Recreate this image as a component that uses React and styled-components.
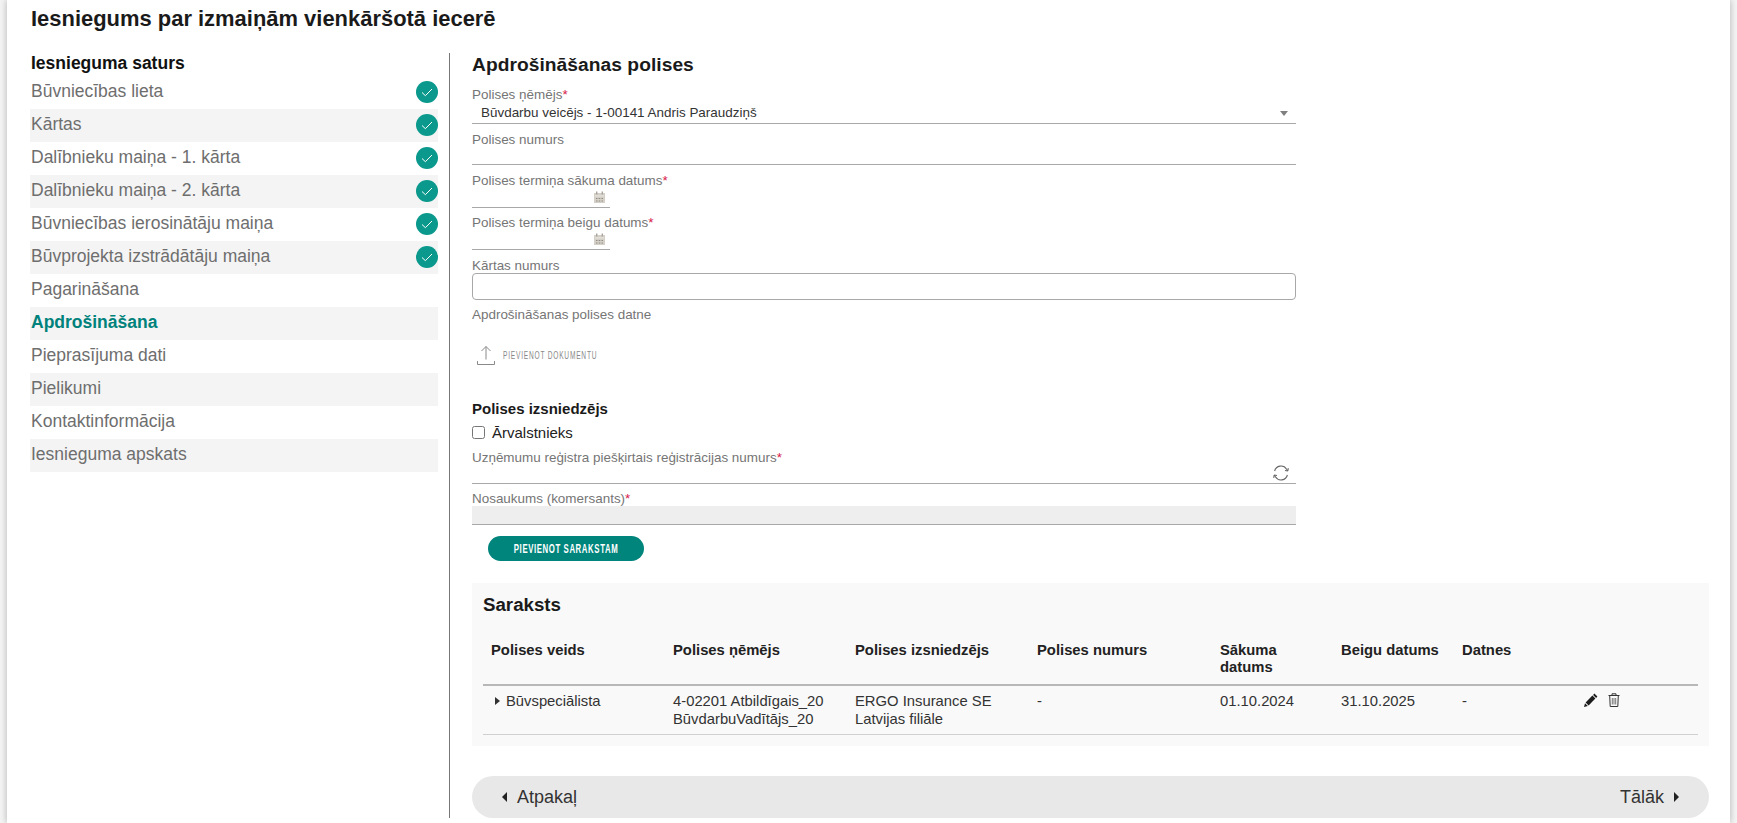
import React from 'react'
import styled, { createGlobalStyle } from 'styled-components'

const GlobalStyle = createGlobalStyle`
  html, body {
    margin: 0;
    height: 100%;
    overflow: hidden;
    background: #f4f4f4;
    font-family: "Liberation Sans", Arial, sans-serif;
  }
`

const steps = [
  { name: 'Būvniecības lieta', done: true },
  { name: 'Kārtas', done: true },
  { name: 'Dalībnieku maiņa - 1. kārta', done: true },
  { name: 'Dalībnieku maiņa - 2. kārta', done: true },
  { name: 'Būvniecības ierosinātāju maiņa', done: true },
  { name: 'Būvprojekta izstrādātāju maiņa', done: true },
  { name: 'Pagarināšana' },
  { name: 'Apdrošināšana', active: true },
  { name: 'Pieprasījuma dati' },
  { name: 'Pielikumi' },
  { name: 'Kontaktinformācija' },
  { name: 'Iesnieguma apskats' },
]

const columns = [
  { title: 'Polises veids', width: 182 },
  { title: 'Polises ņēmējs', width: 182 },
  { title: 'Polises izsniedzējs', width: 182 },
  { title: 'Polises numurs', width: 183 },
  { title: 'Sākuma datums', width: 121 },
  { title: 'Beigu datums', width: 121 },
  { title: 'Datnes', width: 122 },
  { title: '', width: 122 },
]

const CheckBadge = () => (
  <BadgeSvg width="22" height="22" viewBox="0 0 22 22">
    <circle cx="11" cy="11" r="11" fill="#0a998c" />
    <path d="M6 11.5l3.4 3.2L16 8" fill="none" stroke="#fff" strokeWidth="1" />
  </BadgeSvg>
)

const CalendarIcon = () => (
  <svg width="11" height="12" viewBox="0 0 11 12">
    <path d="M0 2h11v10H0z" fill="#d4d0c8" />
    <path d="M2 0.5h1.4v3H2zM7.6 0.5H9v3H7.6z" fill="#a8a49c" />
    <path d="M1 4.5h9v.8H1z" fill="#efedea" />
    <path d="M2 7h1.5v1H2zM4.7 7h1.6v1H4.7zM7.5 7H9v1H7.5zM2 9.4h1.5v1H2zM4.7 9.4h1.6v1H4.7zM7.5 9.4H9v1H7.5z" fill="#8f8b84" />
  </svg>
)

const UploadIcon = () => (
  <svg width="20" height="20" viewBox="0 0 20 20" fill="none" stroke="#8a8a8a" strokeWidth="1">
    <path d="M10 14.5V1.5M5.5 6L10 1.5 14.5 6" />
    <path d="M1.5 16v3.5h17V16" />
  </svg>
)

const RefreshIcon = () => (
  <svg width="18" height="18" viewBox="0 0 18 18" fill="none" stroke="#666" strokeWidth="1.1">
    <path d="M2.6 7A6.6 6.6 0 0 1 14.6 5.2L15.8 7" />
    <path d="M15.4 11A6.6 6.6 0 0 1 3.4 12.8L2.2 11" />
    <path d="M15.8 7l-2.8-.5M15.8 7l.5-2.8M2.2 11l2.8.5M2.2 11l-.5 2.8" />
  </svg>
)

const PencilIcon = () => (
  <svg width="14" height="14" viewBox="0 0 14 14">
    <path d="M10.4 0.6l3 3-1.3 1.3-3-3zM8.4 2.6l3 3-6.8 6.8-3-3z" fill="#1c1c1c" />
    <path d="M1 10.2l2.8 2.8L0 14z" fill="#1c1c1c" />
  </svg>
)

const TrashIcon = () => (
  <svg width="12" height="14" viewBox="0 0 12 14" fill="none" stroke="#333" strokeWidth="1">
    <path d="M0.5 2.5h11M4 2.5V.8h4v1.7M1.7 2.5l.5 11h7.6l.5-11" />
    <path d="M4.3 5v6.5M6 5v6.5M7.7 5v6.5" stroke="#777" />
  </svg>
)

const App = () => {
  return (
    <>
      <GlobalStyle />
      <Page>
        <Title>Iesniegums par izmaiņām vienkāršotā iecerē</Title>
        <Columns>
          <Sidebar>
            <SidebarTitle>Iesnieguma saturs</SidebarTitle>
            {steps.map((step, i) => (
              <StepRow key={step.name} $striped={i % 2 === 1}>
                <StepName $active={step.active}>{step.name}</StepName>
                {step.done && <CheckBadge />}
              </StepRow>
            ))}
          </Sidebar>
          <Content>
            <Heading>Apdrošināšanas polises</Heading>
            <FormBlock>
              <Field $gap={9}>
                <Label>Polises ņēmējs<Star>*</Star></Label>
                <SelectBox>
                  Būvdarbu veicējs - 1-00141 Andris Paraudziņš
                  <SelectArrow />
                </SelectBox>
              </Field>
              <Field>
                <Label>Polises numurs</Label>
                <LineInput $h={18} />
              </Field>
              <Field>
                <Label>Polises termiņa sākuma datums<Star>*</Star></Label>
                <DateInput><CalendarIcon /></DateInput>
              </Field>
              <Field $gap={6}>
                <Label>Polises termiņa beigu datums<Star>*</Star></Label>
                <DateInput><CalendarIcon /></DateInput>
              </Field>
              <Field>
                <Label>Kārtas numurs</Label>
                <BoxInput />
              </Field>
              <Field $gap={6}>
                <Label>Apdrošināšanas polises datne</Label>
                <UploadRow>
                  <UploadIcon />
                  <UploadText>Pievienot dokumentu</UploadText>
                </UploadRow>
              </Field>
              <SubHeading>Polises izsniedzējs</SubHeading>
              <CheckRow>
                <input type="checkbox" />
                Ārvalstnieks
              </CheckRow>
              <Field $gap={7}>
                <Label>Uzņēmumu reģistra piešķirtais reģistrācijas numurs<Star>*</Star></Label>
                <LineInput $h={19}>
                  <RefreshSlot><RefreshIcon /></RefreshSlot>
                </LineInput>
              </Field>
              <Field $gap={6}>
                <Label>Nosaukums (komersants)<Star>*</Star></Label>
                <LineInput $h={19} $disabled />
              </Field>
              <AddButton><AddButtonText>Pievienot sarakstam</AddButtonText></AddButton>
            </FormBlock>
            <ListPanel>
              <ListTitle>Saraksts</ListTitle>
              <Table>
                <thead>
                  <tr>
                    {columns.map((col) => (
                      <HeadCell key={col.title} $w={col.width}>{col.title}</HeadCell>
                    ))}
                  </tr>
                </thead>
                <tbody>
                  <tr>
                    <BodyCell><RowCaret />Būvspeciālista</BodyCell>
                    <BodyCell>4-02201 Atbildīgais_20<br />BūvdarbuVadītājs_20</BodyCell>
                    <BodyCell>ERGO Insurance SE<br />Latvijas filiāle</BodyCell>
                    <BodyCell>-</BodyCell>
                    <BodyCell>01.10.2024</BodyCell>
                    <BodyCell>31.10.2025</BodyCell>
                    <BodyCell>-</BodyCell>
                    <BodyCell>
                      <Actions><PencilIcon /><TrashIcon /></Actions>
                    </BodyCell>
                  </tr>
                </tbody>
              </Table>
            </ListPanel>
            <Footer>
              <NavLink><CaretLeft />Atpakaļ</NavLink>
              <NavLink>Tālāk<CaretRight /></NavLink>
            </Footer>
          </Content>
        </Columns>
      </Page>
    </>
  )
}

const Page = styled.div`
  box-sizing: border-box;
  width: 1723px;
  height: 823px;
  margin-left: 7px;
  padding: 6px 21px 0 23px;
  background: #fff;
  box-shadow: 0 0 7px rgba(0, 0, 0, 0.28);
  overflow: hidden;
`

const Title = styled.h1`
  margin: 0;
  padding-left: 1px;
  font-size: 21.95px;
  line-height: 26px;
  font-weight: 700;
  color: #1a1a1a;
`

const Columns = styled.div`
  display: flex;
  margin-top: 21px;
  height: 765px;
`

const Sidebar = styled.div`
  width: 408px;
  flex: none;
`

const SidebarTitle = styled.div`
  height: 23px;
  padding-left: 1px;
  line-height: 20px;
  font-size: 17.5px;
  font-weight: 700;
  color: #111;
`

const StepRow = styled.div`
  box-sizing: border-box;
  display: flex;
  align-items: center;
  justify-content: space-between;
  height: 33px;
  padding-left: 1px;
  background: ${(p) => (p.$striped ? '#f4f4f4' : 'transparent')};
`

const StepName = styled.span`
  margin-bottom: 2px;
  font-size: 17.5px;
  font-weight: ${(p) => (p.$active ? 700 : 400)};
  color: ${(p) => (p.$active ? '#00827c' : '#6e6e6e')};
`

const BadgeSvg = styled.svg`
  margin-bottom: 1px;
`

const Content = styled.div`
  box-sizing: border-box;
  flex: 1;
  margin-left: 11px;
  padding-left: 22px;
  border-left: 1px solid #777;
`

const Heading = styled.h2`
  margin: 0;
  font-size: 19.2px;
  line-height: 24px;
  font-weight: 700;
  letter-spacing: 0.05px;
  color: #1a1a1a;
`

const FormBlock = styled.div`
  width: 824px;
`

const Field = styled.div`
  margin-top: ${(p) => p.$gap ?? 7}px;
`

const Label = styled.div`
  height: 16px;
  line-height: 17px;
  font-size: 13.44px;
  color: #757575;
`

const Star = styled.span`
  color: #d81b4a;
`

const SelectBox = styled.div`
  box-sizing: border-box;
  position: relative;
  height: 22px;
  padding: 2px 0 0 9px;
  line-height: 17px;
  font-size: 13.44px;
  color: #333;
  border-bottom: 1px solid #a8a8a8;
`

const SelectArrow = styled.span`
  position: absolute;
  right: 8px;
  top: 9px;
  border-left: 4px solid transparent;
  border-right: 4px solid transparent;
  border-top: 5px solid #808080;
`

const LineInput = styled.div`
  box-sizing: border-box;
  position: relative;
  height: ${(p) => p.$h}px;
  border-bottom: 1px solid #a8a8a8;
  background: ${(p) => (p.$disabled ? '#eeeeee' : 'transparent')};
`

const RefreshSlot = styled.span`
  position: absolute;
  right: 6px;
  top: -1px;
`

const DateInput = styled.div`
  box-sizing: border-box;
  display: flex;
  justify-content: flex-end;
  align-items: flex-start;
  width: 138px;
  height: 20px;
  padding: 3px 5px 0 0;
  border-bottom: 1px solid #a8a8a8;
`

const BoxInput = styled.div`
  box-sizing: border-box;
  height: 27px;
  border: 1px solid #a8a8a8;
  border-radius: 4px;
`

const UploadRow = styled.div`
  display: flex;
  align-items: center;
  gap: 7px;
  height: 20px;
  margin-top: 23px;
  padding-left: 4px;
`

const UploadText = styled.span`
  display: inline-block;
  font-size: 11px;
  letter-spacing: 1.3px;
  text-transform: uppercase;
  white-space: nowrap;
  color: #888;
  transform: scaleX(0.6);
  transform-origin: left center;
`

const SubHeading = styled.div`
  margin-top: 35px;
  line-height: 18px;
  font-size: 15px;
  font-weight: 700;
  color: #1a1a1a;
`

const CheckRow = styled.label`
  display: flex;
  align-items: center;
  gap: 7px;
  height: 20px;
  margin-top: 4px;
  font-size: 15px;
  color: #222;

  input {
    width: 13px;
    height: 13px;
    margin: 0;
  }
`

const AddButton = styled.button`
  display: flex;
  align-items: center;
  justify-content: center;
  width: 156px;
  height: 25px;
  margin: 11px 0 0 16px;
  padding: 0;
  border: 0;
  border-radius: 13px;
  background: #00857d;
  overflow: hidden;
`

const AddButtonText = styled.span`
  flex: none;
  font-family: "Liberation Sans", Arial, sans-serif;
  font-size: 13px;
  font-weight: 700;
  letter-spacing: 1px;
  text-transform: uppercase;
  white-space: nowrap;
  color: #fff;
  transform: scaleX(0.6);
`

const ListPanel = styled.div`
  box-sizing: border-box;
  height: 163px;
  margin-top: 22px;
  padding: 10px 11px 0;
  background: #f9f9f9;
`

const ListTitle = styled.div`
  line-height: 24px;
  font-size: 18.7px;
  font-weight: 700;
  color: #1a1a1a;
`

const Table = styled.table`
  width: 1215px;
  margin-top: 16px;
  border-collapse: collapse;
  table-layout: fixed;
`

const HeadCell = styled.th`
  box-sizing: border-box;
  width: ${(p) => p.$w}px;
  height: 52px;
  padding: 9px 8px 6px;
  vertical-align: top;
  text-align: left;
  line-height: 17px;
  font-size: 14.8px;
  font-weight: 700;
  color: #222;
  border-bottom: 2px solid #b8b8b8;
`

const BodyCell = styled.td`
  box-sizing: border-box;
  height: 49px;
  padding: 6px 8px 0;
  vertical-align: top;
  line-height: 18px;
  font-size: 14.8px;
  color: #333;
  border-bottom: 1px solid #d0d0d0;
`

const RowCaret = styled.span`
  display: inline-block;
  margin: 0 6px 1px 4px;
  border-top: 4px solid transparent;
  border-bottom: 4px solid transparent;
  border-left: 5px solid #333;
`

const Actions = styled.div`
  display: flex;
  align-items: center;
  gap: 10px;
  margin-top: 1px;
`

const Footer = styled.div`
  box-sizing: border-box;
  display: flex;
  align-items: center;
  justify-content: space-between;
  height: 42px;
  margin-top: 30px;
  padding: 0 30px;
  border-radius: 21px;
  background: #e8e8e8;
`

const NavLink = styled.span`
  display: flex;
  align-items: center;
  gap: 10px;
  font-size: 18px;
  color: #333;
`

const CaretLeft = styled.span`
  border-top: 5px solid transparent;
  border-bottom: 5px solid transparent;
  border-right: 5px solid #222;
`

const CaretRight = styled.span`
  border-top: 5px solid transparent;
  border-bottom: 5px solid transparent;
  border-left: 5px solid #222;
`

export default App
